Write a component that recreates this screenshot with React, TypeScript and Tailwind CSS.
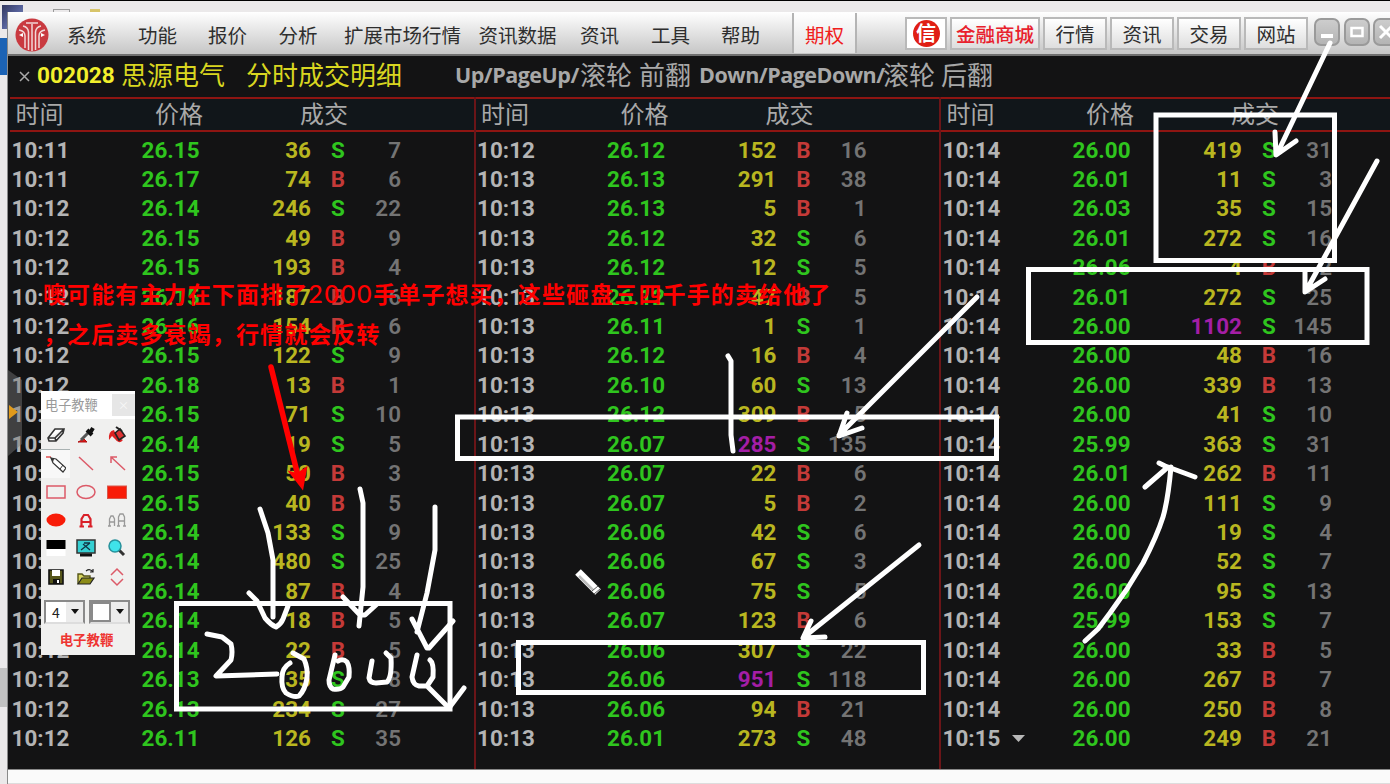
import React from "react";

type Row = [string, string, string, string, string];

const parse = (s: string): Row[] =>
  s
    .trim()
    .split("\n")
    .map((l) => l.trim().split(" ") as Row);

const PANELS: Row[][] = [
  parse(`10:11 26.15 36 S 7
  10:11 26.17 74 B 6
  10:12 26.14 246 S 22
  10:12 26.15 49 B 9
  10:12 26.15 193 B 4
  10:12 26.15 187 B 6
  10:12 26.16 154 B 6
  10:12 26.15 122 S 9
  10:12 26.18 13 B 1
  10:12 26.15 71 S 10
  10:12 26.14 19 S 5
  10:12 26.15 50 B 3
  10:12 26.15 40 B 5
  10:12 26.14 133 S 9
  10:12 26.14 480 S 25
  10:12 26.14 87 B 4
  10:12 26.14 18 B 5
  10:12 26.14 22 B 5
  10:12 26.13 35 S 8
  10:12 26.13 234 S 27
  10:12 26.11 126 S 35`),
  parse(`10:12 26.12 152 B 16
  10:13 26.13 291 B 38
  10:13 26.13 5 B 1
  10:13 26.12 32 S 6
  10:13 26.12 12 S 5
  10:13 26.12 47 B 5
  10:13 26.11 1 S 1
  10:13 26.12 16 B 4
  10:13 26.10 60 S 13
  10:13 26.12 309 B 5
  10:13 26.07 285 S 135
  10:13 26.07 22 B 6
  10:13 26.07 5 B 2
  10:13 26.06 42 S 6
  10:13 26.06 67 S 3
  10:13 26.06 75 S 5
  10:13 26.07 123 B 6
  10:13 26.06 307 S 22
  10:13 26.06 951 S 118
  10:13 26.06 94 B 21
  10:13 26.01 273 S 48`),
  parse(`10:14 26.00 419 S 31
  10:14 26.01 11 S 3
  10:14 26.03 35 S 15
  10:14 26.01 272 S 16
  10:14 26.06 4 B 2
  10:14 26.01 272 S 25
  10:14 26.00 1102 S 145
  10:14 26.00 48 B 16
  10:14 26.00 339 B 13
  10:14 26.00 41 S 10
  10:14 25.99 363 S 31
  10:14 26.01 262 B 11
  10:14 26.00 111 S 9
  10:14 26.00 19 S 4
  10:14 26.00 52 S 7
  10:14 26.00 95 S 13
  10:14 25.99 153 S 7
  10:14 26.00 33 B 5
  10:14 26.00 267 B 7
  10:14 26.00 250 B 8
  10:15 26.00 249 B 21`),
];

const LARGE = new Set(["285", "951", "1102"]);

function Panel({ rows, divider }: { rows: Row[]; divider: boolean }) {
  return (
    <div className={`w-[465.5px] shrink-0 border-l-2 ${divider ? "border-[#6b1518]" : "border-transparent"}`}>
      <div className="flex h-[35px] items-center border-y-[2.5px] border-[#8e1512] bg-[#11161a] pb-[3px] text-[24px] leading-none text-[#a9a9a9]">
        <span className="w-[140px] pl-[5.5px]">时间</span>
        <span className="w-[145px] pl-[5px]">价格</span>
        <span className="pl-[5px]">成交</span>
      </div>
      <div className="pt-[3px] font-[Roboto,sans-serif] text-[22.400px] font-bold tracking-[0.05px]">
        {rows.map(([time, price, vol, side, n], i) => (
          <div key={i} className="flex h-[29.43px] items-center leading-none">
            <span className="flex w-[131.5px] items-center gap-[12px] pl-[1.5px] text-[#b4b4b4]">
              {time}
              {time === "10:15" && (
                <svg width="13" height="7" viewBox="0 0 13 7">
                  <path d="M0 0H13L6.5 7Z" fill="#b8b8b8" />
                </svg>
              )}
            </span>
            <span className="w-[70px] text-[#2fc51e]">{price}</span>
            <span className={`w-[99.500px] text-right ${LARGE.has(vol) ? "text-[#a41ea6]" : "text-[#b9b620]"}`}>{vol}</span>
            <span className={`w-[54px] text-center ${side === "S" ? "text-[#2fc51e]" : "text-[#c43a38]"}`}>{side}</span>
            <span className="-ml-[10px] w-[46px] text-right font-semibold text-[#747474]">{n}</span>
          </div>
        ))}
      </div>
    </div>
  );
}

function Logo() {
  return (
    <svg width="34" height="34" viewBox="0 0 34 34">
      <circle cx="17" cy="17" r="16.5" fill="#c93a40" />
      <g stroke="#f1d9d9" strokeWidth="1.5" fill="none">
        <path d="M13.500 32V14Q13 9 8 8" />
        <path d="M20.500 32V14Q21 9 26 8" />
        <path d="M17 33V6" />
        <path d="M10 30V18Q10 13 4 12" />
        <path d="M24 30V18Q24 13 30 12" />
        <path d="M11 5H23" />
      </g>
      <path d="M4 17L8 15V19ZM30 17L26 15V19Z" fill="#fff" />
    </svg>
  );
}

const MENU: [string, string][] = [
  ["系统", "w-[71px]"],
  ["功能", "w-[70px]"],
  ["报价", "w-[70.5px]"],
  ["分析", "w-[65.5px]"],
  ["扩展市场行情", "w-[134.5px]"],
  ["资讯数据", "w-[101.5px]"],
  ["资讯", "w-[71px]"],
  ["工具", "w-[70px]"],
  ["帮助", "w-[71px]"],
];

function BarButton({ label, cls }: { label: string; cls: string }) {
  return (
    <div
      className={`flex h-[33px] shrink-0 items-center justify-center border-2 border-[#b9b9b9] bg-linear-to-b from-white to-[#dedede] pt-px leading-none ${cls}`}
    >
      {label}
    </div>
  );
}

function WinButton({ children }: { children: React.ReactNode }) {
  return (
    <div className="flex h-[28px] w-[26px] shrink-0 items-center justify-center rounded-[7px] border-2 border-[#9a9a9a] bg-linear-to-b from-[#cdcdcd] to-[#b4b4b4]">
      <svg width="18" height="18" viewBox="0 0 18 18" fill="none" stroke="#fff" strokeWidth="3">
        {children}
      </svg>
    </div>
  );
}

function MenuBar() {
  return (
    <div className="flex h-[44px] shrink-0 items-center overflow-hidden border-b-2 border-[#6f6f6f] bg-linear-to-b from-white to-[#c6c6c6] text-[19.5px] text-[#2e2e2e]">
      <div className="flex w-[59px] shrink-0 pt-1 pl-[7px]">
        <Logo />
      </div>
      {MENU.map(([t, w]) => (
        <span key={t} className={`shrink-0 pt-1 leading-none whitespace-nowrap ${w}`}>
          {t}
        </span>
      ))}
      <div className="flex h-[40px] w-[65px] shrink-0 items-center justify-center border-x-2 border-[#b4b4b4] bg-linear-to-b from-white to-[#e2e2e2] pt-1 leading-none text-[#f0201c]">
        期权
      </div>
      <div className="ml-[48px] flex h-[33px] w-[42px] shrink-0 items-center justify-center border-2 border-[#b9b9b9] bg-white">
        <span className="flex h-[27px] w-[27px] items-center justify-center rounded-full bg-[#e01f14] text-[20px] leading-none font-bold text-white">
          信
        </span>
      </div>
      <div className="ml-[3px] flex gap-[3px]">
        <BarButton label="金融商城" cls="w-[90px] text-[#e8202c] font-medium" />
        <BarButton label="行情" cls="w-[64px]" />
        <BarButton label="资讯" cls="w-[64px]" />
        <BarButton label="交易" cls="w-[64px]" />
        <BarButton label="网站" cls="w-[64px]" />
      </div>
      <div className="mb-0.5 ml-[6px] flex gap-[3.5px]">
        <WinButton>
          <path d="M3 13H15" strokeWidth="4" />
        </WinButton>
        <WinButton>
          <path d="M3.5 5H14.5V13H3.5Z" strokeWidth="2.5" />
        </WinButton>
        <WinButton>
          <path d="M3 3L15 15M15 3L3 15" />
        </WinButton>
      </div>
    </div>
  );
}

function TitleBar() {
  return (
    <div className="flex h-[41px] shrink-0 items-center pb-[5px] text-[26px] leading-none whitespace-nowrap text-[#a8a8a8]">
      <svg className="mt-1 ml-[11px]" width="11" height="11" viewBox="0 0 11 11" stroke="#aaa" strokeWidth="1.5">
        <path d="M1 1L10 10M10 1L1 10" />
      </svg>
      <span className="mt-1 ml-[7px] w-[84px] font-[Roboto,sans-serif] text-[22.6px] font-bold text-[#f2ef2c]">002028</span>
      <span className="w-[125px] text-[#d9d620]">思源电气</span>
      <span className="w-[209px] text-[#d9d620]">分时成交明细</span>
      <span className="mt-0.5 w-[125px] font-['Open_Sans',sans-serif] text-[21.500px] font-bold tracking-[-0.500px]">Up/PageUp/</span>
      <span className="w-[59px]">滚轮</span>
      <span className="w-[60px]">前翻</span>
      <span className="mt-0.5 w-[184px] font-['Open_Sans',sans-serif] text-[21.500px] font-bold tracking-[-0.500px]">Down/PageDown/</span>
      <span className="w-[58px]">滚轮</span>
      <span>后翻</span>
    </div>
  );
}

const TOOLS: React.ReactNode[] = [
  <path key="0" d="M2 13L9 4H18L17 8L10 16H3Z M2 13H9L18 4 M9 13L10 16" fill="#fff" stroke="#333" strokeWidth="1.6" />,
  <g key="1">
    <path d="M2 17H11L8 14Z" fill="#e01818" stroke="#b01010" />
    <path d="M5 15L13 7" stroke="#555" strokeWidth="3" />
    <path d="M11 5L16 10M14 8L17 3" stroke="#111" strokeWidth="4" />
  </g>,
  <g key="2">
    <path d="M2 15Q1 6 7 5L9 10L12 13L16 15Q12 20 8 14L5 11Z" fill="#d22" />
    <path d="M8 8L13 4L18 11L12 15Z" fill="#d33" stroke="#222" strokeWidth="1.6" />
    <path d="M9 2L15 6" stroke="#222" strokeWidth="2" />
  </g>,
  <g key="3">
    <path d="M0 3H5" stroke="#e05050" strokeWidth="1.5" />
    <path d="M5 4L10 5L20 14L17 18L7 9Z" fill="#fff" stroke="#333" strokeWidth="1.2" />
    <path d="M14 15L17 11" stroke="#333" />
    <path d="M4 3L8 5L7 8Z" fill="#333" />
  </g>,
  <path key="4" d="M3 4L17 17" stroke="#dc5a68" strokeWidth="1.5" />,
  <path key="5" d="M18 17L4 4M4 10V4H10" stroke="#dc5a68" strokeWidth="1.5" fill="none" />,
  <rect key="6" x="1" y="4" width="18" height="12" stroke="#dc5a68" strokeWidth="1.5" fill="none" />,
  <ellipse key="7" cx="10" cy="10" rx="9" ry="6.5" stroke="#dc5a68" strokeWidth="1.5" fill="none" />,
  <rect key="8" x="0.5" y="4" width="19" height="12.5" fill="#f81c08" stroke="#d8584c" />,
  <ellipse key="9" cx="10" cy="10" rx="9.5" ry="6.5" fill="#f81c08" />,
  <path key="10" d="M5.500 17V9L8 5H12L14.500 9V17M6 12H14M3.500 16.500H8M12 16.500H16.500" stroke="#d92028" strokeWidth="2.2" fill="none" />,
  <path key="11" d="M2.500 16V9L4 6H6L7.500 9V16M3 12H7M11.500 16V7L13 4H16L17.500 7V16M12 11H17M1 16H4M10 16H13M16 16H19" stroke="#999" strokeWidth="1.3" fill="none" />,
  <g key="12">
    <rect x="0.500" y="2" width="19" height="9" fill="#000" />
    <rect x="0.500" y="11" width="19" height="7" fill="#fff" />
  </g>,
  <g key="13">
    <rect x="1" y="2" width="18" height="13" fill="#35cfd2" stroke="#333" strokeWidth="1.5" />
    <path d="M5 12L14 5M7 6L14 12M8 5H14" stroke="#134" strokeWidth="1.3" />
    <path d="M4 17H16" stroke="#111" strokeWidth="3" />
  </g>,
  <g key="14">
    <path d="M11 11L17 17" stroke="#333" strokeWidth="3" />
    <circle cx="8" cy="8" r="6" fill="#3fe3ea" stroke="#27919b" strokeWidth="1.5" />
  </g>,
  <g key="15">
    <path d="M3 3H17V17H3Z" fill="#55551a" stroke="#111" strokeWidth="1.6" />
    <rect x="6" y="3" width="8" height="6" fill="#fff" />
    <rect x="7" y="12" width="7" height="5" fill="#111" />
    <rect x="11" y="13" width="2" height="3" fill="#fff" />
  </g>,
  <g key="16">
    <path d="M2 17V7H6L8 9H14V11" fill="#d8d560" stroke="#555518" strokeWidth="1.4" />
    <path d="M2 17L6 11H18L14 17Z" fill="#8c8c18" stroke="#222" strokeWidth="1.2" />
    <path d="M10 4Q14 1 17 5M17 2V5H14" fill="none" stroke="#222" strokeWidth="1.2" />
  </g>,
  <path key="17" d="M4 8L10 2L16 8M4 12L10 18L16 12" stroke="#dc5a68" strokeWidth="1.5" fill="none" />,
];

function Combo({ children }: { children: React.ReactNode }) {
  return (
    <div className="flex h-[24px] w-[41px] border-2 border-[#8a8a8a] border-b-[#ddd] bg-white">
      <div className="flex flex-1 items-center justify-center text-[14px] leading-none text-[#222]">{children}</div>
      <div className="flex w-[17px] items-center justify-center bg-[#ececec]">
        <svg width="8" height="5" viewBox="0 0 8 5">
          <path d="M0 0H8L4 5Z" fill="#111" />
        </svg>
      </div>
    </div>
  );
}

function ToolPalette() {
  return (
    <div className="absolute top-[391px] left-[41px] flex h-[264px] w-[94px] flex-col bg-[#f0f0ef]">
      <div className="flex h-[28px] items-center justify-between bg-white pl-[4px] text-[13.2px] leading-none text-[#9a9a9a]">
        电子教鞭
        <span className="flex h-[22px] w-[23px] items-center justify-center bg-[#e6e6e6] text-[11px] text-[#f8f8f8]">×</span>
      </div>
      <div className="grid grid-cols-[29px_31px_31px] pt-[2px]">
        {TOOLS.map((icon, i) => (
          <div
            key={i}
            className={`flex h-[28.3px] items-center justify-center ${i === 3 ? "border-t border-[#a9b2b2] bg-[#f8f8f8]" : ""}`}
          >
            <svg width="20" height="20" viewBox="0 0 20 20" fill="none">
              {icon}
            </svg>
          </div>
        ))}
      </div>
      <div className="mt-[9px] flex gap-[4px] pl-[3px]">
        <Combo>4</Combo>
        <Combo>
          <span className="h-[20px] w-[20px] border-2 border-[#8a8a8a] bg-white" />
        </Combo>
      </div>
      <div className="pt-[9px] pr-[3px] text-center text-[13.4px] leading-none font-bold text-[#ee3532]">电子教鞭</div>
    </div>
  );
}

function Doodles() {
  return (
    <svg className="absolute inset-0" width="1390" height="784" viewBox="0 0 1390 784" fill="none">
      <g stroke="#fff" strokeWidth="5">
        <rect x="457.500" y="417" width="539" height="41.500" />
        <rect x="518.500" y="642.500" width="405" height="50" />
        <rect x="1156" y="115" width="178.500" height="145.500" />
        <rect x="1028.500" y="269.500" width="338.500" height="73" />
        <rect x="176.500" y="603.500" width="273.500" height="105.500" />
      </g>
      <g stroke="#fff" strokeWidth="5" strokeLinecap="round" strokeLinejoin="round">
        <path d="M1330 43L1277 154M1275 132L1276 155L1296 141" />
        <path d="M1377 161L1306 291M1305 272V292L1325 279" />
        <path d="M977 297L839 435M847 413L839 436L862 428" />
        <path d="M919 545L804 637M811 621L803 638L825 637" />
        <path d="M728 356L731 361V435L733 451" />
        <path d="M1085 641L1098 629L1110 613L1127 589L1143 563Q1157 536 1163 517Q1168 500 1171 467M1145 487L1168 467L1195 477M1159 463L1171 469" />
        <path d="M260 509L268 533L273 560V617M249 593L257 601L265 618Q271 625 276 627Q281 624 283 619L288 606" />
        <path d="M360 489L363 503V587L359 626M343 597L360 615H365L376 605" />
        <path d="M435 507V550L427 593L417 632M412 619L427 648H429L453 621" />
        <path d="M207 634L222 637L231 644Q233 652 231 660L216 676L277 674" />
        <path d="M290 663Q282 668 282 677Q281 688 286 693Q294 698 299 696Q305 690 307 678Q308 668 304 659L293 653" />
        <path d="M335 655L329 680Q329 687 333 689Q340 690 343 687L349 677Q350 667 347 662Q343 658 338 661" />
        <path d="M372 661L369 678Q370 683 376 683L387 682Q392 677 391 658L386 653" />
        <path d="M417 655L412 677Q413 685 419 686L427 686L433 677Q434 663 430 660M428 687L449 708L464 688" />
      </g>
      <g strokeLinecap="butt">
        <path d="M578 572L598 592" stroke="#fff" strokeWidth="8" />
        <path d="M579 576L593 590" stroke="#bbb" strokeWidth="2.500" />
        <path d="M592 591L598 586M594 594L600 589" stroke="#555" strokeWidth="1" />
      </g>
      <path d="M271 367L297 472" stroke="#f00" strokeWidth="5.500" strokeLinecap="round" />
      <path d="M287.500 470.500L297 473L307.500 466L303 490.500Z" fill="#f00" />
    </svg>
  );
}

function Desktop() {
  return (
    <div className="absolute inset-0 flex flex-col bg-[#ebe9ea]">
      <div className="h-px bg-black" />
      <div className="flex h-[29px] items-start gap-[30px] pt-[4px] pl-[2px]">
        <span className="h-[24px] w-[21px] bg-linear-to-br from-[#33395f] via-[#56619a] to-[#8795b8]" />
        <span className="mt-[4px] h-[5px] w-[17px] border border-[#999]" />
        <span className="-ml-[10px] mt-[4px] h-[4px] w-[10px] bg-[#d8c56a]" />
      </div>
      <div className="mt-[8px] h-[37px] w-[7px] bg-[#1c63b5]" />
      <div className="mt-[593px] h-[39px] w-[7px] bg-[#c2c2c2]" />
    </div>
  );
}

export default function App() {
  return (
    <div className="relative h-[784px] w-[1390px] overflow-hidden font-['Noto_Sans_CJK_SC',sans-serif]">
      <Desktop />
      <div className="relative flex h-full flex-col pt-[12px] pl-[7px]">
        <div className="flex flex-1 flex-col overflow-hidden border-l border-[#8a8a8a] bg-[#131314]">
          <MenuBar />
          <TitleBar />
          <div className="flex flex-1 overflow-hidden">
            {PANELS.map((rows, i) => (
              <Panel key={i} rows={rows} divider={i > 0} />
            ))}
          </div>
          <div className="h-[15px] shrink-0 border-t border-b border-t-[#888] border-b-[#ddd] bg-[#fafafa]" />
        </div>
      </div>
      <svg className="absolute top-[370px] left-[8px]" width="15" height="86" viewBox="0 0 15 86">
        <path d="M0 0L14 10V74L0 86Z" fill="#777" fillOpacity="0.45" />
        <path d="M1 35L10 42L1 49Z" fill="#e09a1c" />
      </svg>
      <ToolPalette />
      <Doodles />
      <div className="absolute top-[272.500px] left-[43px] text-[23px] leading-[40px] font-bold tracking-[1.120px] whitespace-nowrap text-[#ff0000]">
        <div>
          噢可能有主力在下面排了
          <span className="font-[Lato,sans-serif] text-[25px] font-medium tracking-[1.700px]">2000</span>
          手单子想买，这些砸盘三四千手的卖给他了
        </div>
        <div>，之后卖多衰竭，行情就会反转</div>
      </div>
    </div>
  );
}
